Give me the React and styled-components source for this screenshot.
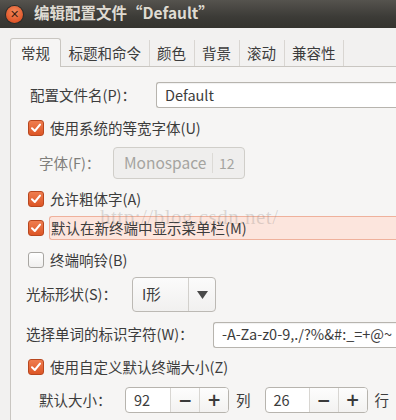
import React from "react";
import styled, { createGlobalStyle } from "styled-components";

const FONT = `"Noto Sans CJK SC", "Noto Sans", sans-serif`;

const GlobalStyle = createGlobalStyle`
  html, body {
    margin: 0;
    padding: 0;
    overflow: hidden;
    background: #f2f1f0;
  }
  body {
    font-family: ${FONT};
    font-size: 14.5px;
    color: #3c3c3c;
  }
`;

const Window = styled.div`
  position: relative;
  width: 470px;
  height: 420px;
  background: #f2f1f0;
`;

const TitleBar = styled.div`
  height: 28px;
  display: flex;
  align-items: center;
  padding-left: 6px;
  gap: 11px;
  background: linear-gradient(#55534e, #3c3b37 60%, #35342f);
`;

const CloseButton = styled.div`
  width: 17px;
  height: 17px;
  border-radius: 50%;
  background: radial-gradient(circle at 50% 35%, #f48a5c, #e0572a 70%, #c4461f);
  box-shadow: 0 0 0 1px #2c2b28;
  display: flex;
  align-items: center;
  justify-content: center;
  color: #3d1d10;
  font-family: "DejaVu Sans", sans-serif;
  font-size: 11px;
  line-height: 1;
`;

const Title = styled.div`
  color: #dfdbd2;
  font-weight: bold;
  font-size: 15.5px;
  line-height: 1;
  padding-bottom: 2px;
`;

const Body = styled.div`
  padding: 10px 0 0 10px;
`;

const TabBar = styled.div`
  display: flex;
  align-items: flex-end;
  height: 28px;
  position: relative;
  z-index: 1;
`;

const Tab = styled.div`
  height: ${(p) => (p.$active ? "29px" : "26px")};
  padding: 0 ${(p) => (p.$active ? "10px" : "7.5px")};
  display: flex;
  align-items: center;
  box-sizing: border-box;
  line-height: 1;
  white-space: nowrap;
  color: #3c3c3c;
  background: ${(p) => (p.$active ? "#f6f5f4" : "transparent")};
  border: ${(p) => (p.$active ? "1px solid #c9c6c1" : "none")};
  border-bottom: none;
  border-radius: ${(p) => (p.$active ? "3px 3px 0 0" : "0")};
  border-right: 1px solid ${(p) => (p.$active ? "#c9c6c1" : "#d9d6d2")};
  margin-bottom: ${(p) => (p.$active ? "-1px" : "0")};
`;

const Pane = styled.div`
  border-left: 1px solid #c9c6c1;
  border-top: 1px solid #c9c6c1;
  background: #f6f5f4;
  height: 360px;
  padding: 15px 0 0 15px;
  box-sizing: border-box;
  display: flex;
  flex-direction: column;
`;

const Row = styled.div`
  display: flex;
  align-items: center;
  height: ${(p) => p.$h}px;
  margin-top: ${(p) => p.$mt || 0}px;
  padding-left: ${(p) => p.$indent || 0}px;
  white-space: nowrap;
`;

const Label = styled.span`
  line-height: 1;
  width: ${(p) => (p.$w ? `${p.$w}px` : "auto")};
  flex-shrink: 0;
  color: ${(p) => (p.$disabled ? "#7f7e7b" : "#3c3c3c")};
`;

const Entry = styled.div`
  height: ${(p) => p.$h || 26}px;
  flex: 1;
  box-sizing: border-box;
  background: #fff;
  border: 1px solid #b7b4ae;
  border-right: none;
  border-radius: 3px 0 0 3px;
  display: flex;
  align-items: center;
  padding-left: 8px;
  line-height: 1;
  box-shadow: inset 0 1px 1px rgba(0, 0, 0, 0.06);
`;

const CheckRow = styled.label`
  display: flex;
  align-items: center;
  gap: 6px;
  height: ${(p) => p.$h || 24}px;
  margin-top: ${(p) => p.$mt || 0}px;
  padding-left: 2px;
  white-space: nowrap;
`;

const Box = styled.span`
  width: 16px;
  height: 16px;
  box-sizing: border-box;
  border-radius: 3px;
  flex-shrink: 0;
  display: flex;
  align-items: center;
  justify-content: center;
  border: 1px solid ${(p) => (p.$checked ? "#b8471f" : "#a8a6a2")};
  background: ${(p) =>
    p.$checked
      ? "linear-gradient(#ef7d4f, #dd5626)"
      : "linear-gradient(#ffffff, #f0efee)"};
`;

const CheckText = styled.span`
  line-height: 1;
  ${(p) =>
    p.$focus &&
    `
    flex: 1;
    height: 24px;
    display: flex;
    align-items: center;
    padding-left: 1px;
    margin-left: -1px;
    background: #fce5dd;
    border: 1px solid #efb19c;
    border-right: none;
    border-radius: 3px 0 0 3px;
    box-sizing: border-box;
  `}
`;

const FontButton = styled.div`
  display: flex;
  align-items: center;
  height: 32px;
  box-sizing: border-box;
  border: 1px solid #d0cec9;
  border-radius: 4px;
  background: #efeeed;
  color: #a5a4a0;
  font-size: 15.5px;
  line-height: 1;
`;

const FontName = styled.span`
  padding: 0 10px 0 10px;
  width: 98px;
  box-sizing: border-box;
`;

const FontSize = styled.span`
  border-left: 1px solid #dcdad6;
  height: 20px;
  display: flex;
  align-items: center;
  padding: 0 9px 0 6px;
  font-size: 14px;
`;

const Combo = styled.div`
  display: flex;
  align-items: center;
  width: 84px;
  height: 35px;
  box-sizing: border-box;
  border: 1px solid #bcb9b4;
  border-radius: 4px;
  background: linear-gradient(#fbfbfb, #f1f0ef);
  line-height: 1;
`;

const ComboText = styled.span`
  flex: 1;
  padding-left: 9px;
`;

const ComboArrow = styled.span`
  width: 26px;
  height: 100%;
  border-left: 1px solid #d2d0cc;
  display: flex;
  align-items: center;
  justify-content: center;
`;

const Spin = styled.div`
  display: flex;
  height: 26px;
  width: ${(p) => p.$w}px;
  box-sizing: border-box;
  border: 1px solid #b7b4ae;
  border-radius: 4px;
  background: #fff;
  overflow: hidden;
  line-height: 1;
`;

const SpinValue = styled.span`
  flex: 1;
  display: flex;
  align-items: center;
  padding-left: 8px;
`;

const SpinButton = styled.span`
  width: 28px;
  border-left: 1px solid #d8d6d2;
  display: flex;
  align-items: center;
  justify-content: center;
  background: linear-gradient(#fdfdfd, #f3f2f1);
  color: #3a3a3a;
  font-family: "DejaVu Sans", sans-serif;
  font-weight: bold;
  font-size: 17px;
`;

const Unit = styled.span`
  line-height: 1;
  margin: 0 ${(p) => p.$mr || 0}px 0 7px;
`;

const Watermark = styled.div`
  position: absolute;
  left: 100px;
  top: 205px;
  font-family: "Liberation Serif", serif;
  font-size: 21px;
  letter-spacing: 0.5px;
  color: rgba(140, 135, 130, 0.28);
  pointer-events: none;
`;

function Check({ checked, label, focus, mt }) {
  return (
    <CheckRow $mt={mt}>
      <Box $checked={checked}>
        {checked && (
          <svg width="12" height="12" viewBox="0 0 12 12">
            <path
              d="M2 6.3 L4.8 9 L10 2.6"
              fill="none"
              stroke="#fff"
              strokeWidth="2"
              strokeLinecap="round"
              strokeLinejoin="round"
            />
          </svg>
        )}
      </Box>
      <CheckText $focus={focus}>{label}</CheckText>
    </CheckRow>
  );
}

const tabs = ["常规", "标题和命令", "颜色", "背景", "滚动", "兼容性"];

export default function App() {
  return (
    <Window>
      <GlobalStyle />
      <TitleBar>
        <CloseButton>✕</CloseButton>
        <Title>编辑配置文件“Default”</Title>
      </TitleBar>
      <Body>
        <TabBar>
          {tabs.map((t, i) => (
            <Tab key={t} $active={i === 0}>
              {t}
            </Tab>
          ))}
        </TabBar>
        <Pane>
          <Row $h={26} $indent={4}>
            <Label $w={126}>配置文件名(P)：</Label>
            <Entry>Default</Entry>
          </Row>
          <Check checked mt={8} label="使用系统的等宽字体(U)" />
          <Row $h={32} $mt={7} $indent={13}>
            <Label $w={74} $disabled>
              字体(F)：
            </Label>
            <FontButton>
              <FontName>Monospace</FontName>
              <FontSize>12</FontSize>
            </FontButton>
          </Row>
          <Check checked mt={8} label="允许粗体字(A)" />
          <Check checked focus mt={5} label="默认在新终端中显示菜单栏(M)" />
          <Check mt={8} label="终端响铃(B)" />
          <Row $h={35} $mt={5}>
            <Label $w={106}>光标形状(S)：</Label>
            <Combo>
              <ComboText>I形</ComboText>
              <ComboArrow>
                <svg width="11" height="8" viewBox="0 0 11 8">
                  <path d="M0 0 H11 L5.5 8 Z" fill="#4a4a4a" />
                </svg>
              </ComboArrow>
            </Combo>
          </Row>
          <Row $h={25} $mt={10}>
            <Label $w={187}>选择单词的标识字符(W)：</Label>
            <Entry $h={26}>-A-Za-z0-9,./?%&amp;#:_=+@~</Entry>
          </Row>
          <Check checked mt={8} label="使用自定义默认终端大小(Z)" />
          <Row $h={26} $mt={8} $indent={13}>
            <Label $w={86}>默认大小：</Label>
            <Spin $w={104}>
              <SpinValue>92</SpinValue>
              <SpinButton>−</SpinButton>
              <SpinButton>+</SpinButton>
            </Spin>
            <Unit $mr={14}>列</Unit>
            <Spin $w={103}>
              <SpinValue>26</SpinValue>
              <SpinButton>−</SpinButton>
              <SpinButton>+</SpinButton>
            </Spin>
            <Unit>行</Unit>
          </Row>
        </Pane>
      </Body>
      <Watermark>http://blog.csdn.net/</Watermark>
    </Window>
  );
}
